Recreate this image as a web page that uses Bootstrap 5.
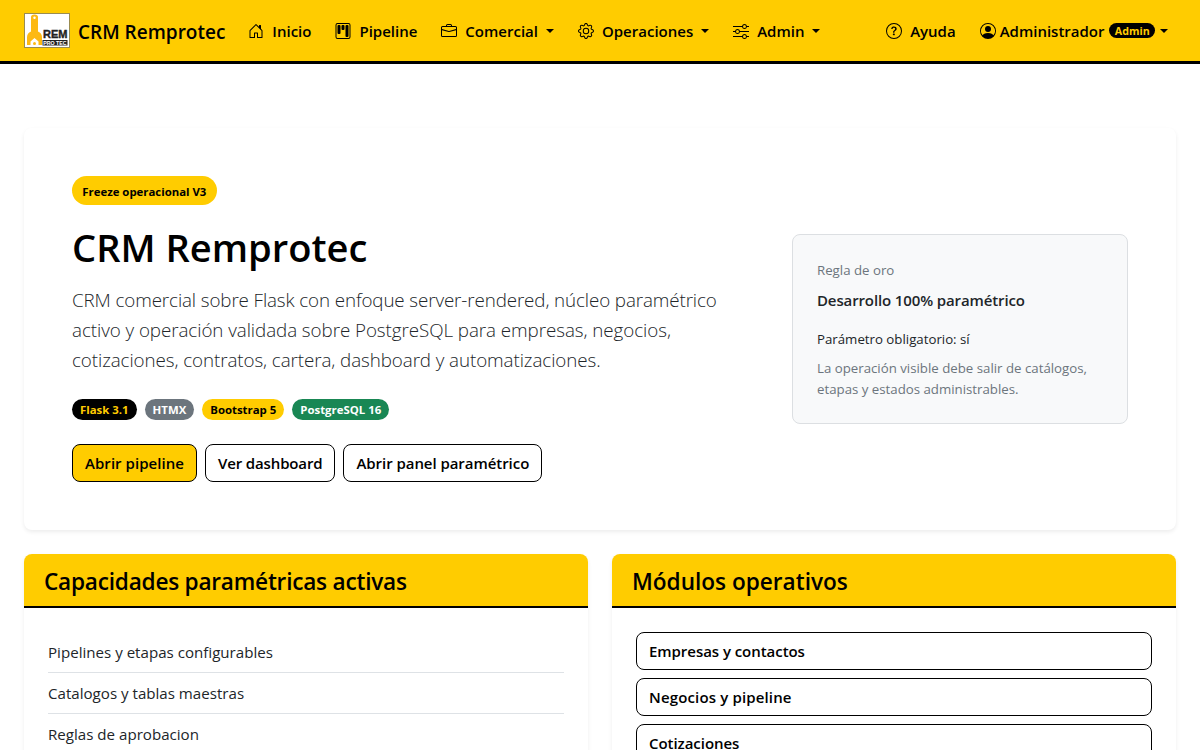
<!DOCTYPE html>
<html lang="es">
<head>
<meta charset="utf-8">
<meta name="viewport" content="width=device-width, initial-scale=1">
<title>CRM Remprotec</title>
<link href="https://cdn.jsdelivr.net/npm/bootstrap@5.3.0/dist/css/bootstrap.min.css" rel="stylesheet">
<style>
:root{--brand:#ffcc00}
body{font-family:"Open Sans","Noto Sans",sans-serif;font-size:15px;line-height:24px;color:#212529;background:#fff;overflow:hidden}
.topbar{background:var(--brand);border-bottom:3px solid #000;height:64px}
.topbar .navbar-brand{font-size:19px;font-weight:600;color:#000;line-height:30px;margin-right:11px}
.topbar .navbar-brand span{position:relative;top:1px}
.topbar .navbar-nav .nav-link{display:flex;align-items:center;color:#000;font-weight:600;font-size:15px;padding:8px 12px;white-space:nowrap}
.topbar .nav-link svg{margin-right:8px;flex:none}
.topbar .dropdown-toggle::after{margin-left:8px;border-top-width:4px;border-left-width:4px;border-right-width:4px;vertical-align:0}
.topbar .navbar-nav .user-link{padding-right:8px}
.topbar .user-link svg{margin-right:4px}
.topbar .user-link::after{margin-left:5px}
.pill{border-radius:50rem;font-weight:700;font-size:11.4px;line-height:12px;padding:4.5px 8px;height:21px;display:inline-block;white-space:nowrap}
.pill-brand{background:var(--brand);color:#000}
.pill-dark{background:#000;color:var(--brand)}
.user-role{font-size:10.7px;height:15px;padding:1.5px 5.3px;margin-left:5px}
.panel{border:0;border-radius:8px;box-shadow:0 2px 4px rgba(0,0,0,.075)}
.hero-card{margin-top:64px}
.hero-tag{height:29px;padding:10px 10.3px 7px;letter-spacing:-.01px}
.hero-title{font-size:38.1px;line-height:48px;font-weight:600;color:#000;padding-top:2px;margin-bottom:14px}
.hero-text{font-size:18.8px;line-height:30px;font-weight:300;white-space:nowrap;margin-bottom:24px}
.hero-text .l1{letter-spacing:-.11px}
.hero-text .l2{letter-spacing:-.06px}
.hero-text .l3{letter-spacing:-.08px}
.btn{font-size:15px;line-height:24px;font-weight:600;border-radius:8px;color:#000;border-color:#000;white-space:nowrap}
.btn-brand{background:var(--brand);letter-spacing:.05px}
.btn-plain{background:#fff;letter-spacing:-.05px}
.btn-tight{letter-spacing:-.14px}
.btn-wide{letter-spacing:.15px}
.rule-box{background:#f8f9fa;border:1px solid #dcdfe2;border-radius:8px;height:190px;padding:25px 24px 23px}
.rule-name{letter-spacing:-.12px;margin:7px 0 17px}
.rule-note{font-size:13.25px;line-height:21px}
.panel-head{background:var(--brand);border-bottom:2px solid #000;border-radius:8px 8px 0 0;height:54px;padding:13px 20px 10px}
.panel-head h2{font-size:22.6px;line-height:29px;font-weight:600;color:#000;margin:0}
.panel-head .head-tight{letter-spacing:-.22px}
.feature{font-size:15.12px;padding:8px 0;border-bottom:1px solid #dee2e6}
</style>
</head>
<body>
<nav class="navbar navbar-expand topbar p-0">
<div class="container-fluid px-4">
<a class="navbar-brand d-flex align-items-center gap-2 p-0" href="#">
<svg width="46" height="35" viewBox="0 0 46 35"><rect x=".5" y=".5" width="45" height="34" fill="#fff" stroke="#9a8c50"/><path d="M7 4Q7 1.500 10.500 1.500T14 4V18.500Q18 20 18 24.500V32H14.500V28.500L10.500 25 6.500 28.500V32H3V24.500Q3 20 7 18.500Z" fill="#fdb913"/><circle cx="10.500" cy="4.800" r="1.200" fill="#fff"/><circle cx="10.500" cy="30.500" r="1.500" fill="#fdb913"/><text x="19" y="25" font-family="Liberation Sans" font-weight="700" font-size="11.500" textLength="24.500" lengthAdjust="spacingAndGlyphs" fill="#222" stroke="#222" stroke-width=".4">REM</text><rect x="18.500" y="27" width="25" height="5.500" fill="#222"/><text x="19.200" y="32" font-family="Liberation Sans" font-weight="700" font-size="6.200" textLength="23.500" lengthAdjust="spacingAndGlyphs" fill="#fff">PRO TEC</text></svg>
<span>CRM Remprotec</span></a>
<ul class="navbar-nav me-auto">
<li class="nav-item"><a class="nav-link" href="#"><svg width="16" height="16" fill="currentColor" viewBox="0 0 16 16"><path d="M8.354 1.146a.5.5 0 0 0-.708 0l-6 6A.5.5 0 0 0 1.500 7.500v7a.5.5 0 0 0 .5.5h4.500a.5.5 0 0 0 .5-.5v-4h2v4a.5.5 0 0 0 .5.5H14a.5.5 0 0 0 .5-.5v-7a.5.5 0 0 0-.146-.354L13 5.793V2.500a.5.5 0 0 0-.5-.5h-1a.5.5 0 0 0-.5.5v1.293zM2.500 14V7.707l5.500-5.500 5.500 5.500V14H10v-4a.5.5 0 0 0-.5-.5h-3a.5.5 0 0 0-.5.5v4z"/></svg><span>Inicio</span></a></li>
<li class="nav-item"><a class="nav-link" href="#"><svg width="16" height="16" fill="currentColor" viewBox="0 0 16 16"><path d="M13.500 1a1 1 0 0 1 1 1v12a1 1 0 0 1-1 1h-11a1 1 0 0 1-1-1V2a1 1 0 0 1 1-1zm-11-1a2 2 0 0 0-2 2v12a2 2 0 0 0 2 2h11a2 2 0 0 0 2-2V2a2 2 0 0 0-2-2z"/><path d="M6.500 3a1 1 0 0 1 1-1h1a1 1 0 0 1 1 1v3a1 1 0 0 1-1 1h-1a1 1 0 0 1-1-1zm-4 0a1 1 0 0 1 1-1h1a1 1 0 0 1 1 1v7a1 1 0 0 1-1 1h-1a1 1 0 0 1-1-1zm8 0a1 1 0 0 1 1-1h1a1 1 0 0 1 1 1v10a1 1 0 0 1-1 1h-1a1 1 0 0 1-1-1z"/></svg><span>Pipeline</span></a></li>
<li class="nav-item"><a class="nav-link dropdown-toggle" href="#"><svg width="16" height="16" fill="currentColor" viewBox="0 0 16 16"><path d="M6.500 1A1.500 1.500 0 0 0 5 2.500V3H1.500A1.500 1.500 0 0 0 0 4.500v8A1.500 1.500 0 0 0 1.500 14h13a1.500 1.500 0 0 0 1.500-1.500v-8A1.500 1.500 0 0 0 14.500 3H11v-.5A1.500 1.500 0 0 0 9.500 1zm0 1h3a.5.5 0 0 1 .5.5V3H6v-.5a.5.5 0 0 1 .5-.5m1.886 6.914L15 7.151V12.500a.5.5 0 0 1-.5.5h-13a.5.5 0 0 1-.5-.5V7.150l6.614 1.764a1.500 1.500 0 0 0 .772 0M1.500 4h13a.5.5 0 0 1 .5.5v1.616L8.129 7.948a.5.5 0 0 1-.258 0L1 6.116V4.500a.5.5 0 0 1 .5-.5"/></svg><span>Comercial</span></a></li>
<li class="nav-item"><a class="nav-link dropdown-toggle" href="#"><svg width="16" height="16" fill="currentColor" viewBox="0 0 16 16"><path d="M8 4.754a3.246 3.246 0 1 0 0 6.492 3.246 3.246 0 0 0 0-6.492M5.754 8a2.246 2.246 0 1 1 4.492 0 2.246 2.246 0 0 1-4.492 0"/><path d="M9.796 1.343c-.527-1.790-3.065-1.790-3.592 0l-.094.319a.873.873 0 0 1-1.255.520l-.292-.160c-1.640-.892-3.433.902-2.540 2.541l.159.292a.873.873 0 0 1-.520 1.255l-.319.094c-1.790.527-1.790 3.065 0 3.592l.319.094a.873.873 0 0 1 .520 1.255l-.160.292c-.892 1.640.901 3.434 2.541 2.540l.292-.159a.873.873 0 0 1 1.255.520l.094.319c.527 1.790 3.065 1.790 3.592 0l.094-.319a.873.873 0 0 1 1.255-.520l.292.160c1.640.893 3.434-.902 2.540-2.541l-.159-.292a.873.873 0 0 1 .520-1.255l.319-.094c1.790-.527 1.790-3.065 0-3.592l-.319-.094a.873.873 0 0 1-.520-1.255l.160-.292c.893-1.640-.902-3.433-2.541-2.540l-.292.159a.873.873 0 0 1-1.255-.520zm-2.633.283c.246-.835 1.428-.835 1.674 0l.094.319a1.873 1.873 0 0 0 2.693 1.115l.291-.160c.764-.415 1.600.420 1.184 1.185l-.159.292a1.873 1.873 0 0 0 1.116 2.692l.318.094c.835.246.835 1.428 0 1.674l-.319.094a1.873 1.873 0 0 0-1.115 2.693l.160.291c.415.764-.420 1.600-1.185 1.184l-.291-.159a1.873 1.873 0 0 0-2.693 1.116l-.094.318c-.246.835-1.428.835-1.674 0l-.094-.319a1.873 1.873 0 0 0-2.692-1.115l-.292.160c-.764.415-1.600-.420-1.184-1.185l.159-.291A1.873 1.873 0 0 0 1.945 8.930l-.319-.094c-.835-.246-.835-1.428 0-1.674l.319-.094A1.873 1.873 0 0 0 3.060 4.377l-.160-.292c-.415-.764.420-1.600 1.185-1.184l.292.159a1.873 1.873 0 0 0 2.692-1.115z"/></svg><span>Operaciones</span></a></li>
<li class="nav-item"><a class="nav-link dropdown-toggle" href="#"><svg width="16" height="16" fill="currentColor" viewBox="0 0 16 16"><path fill-rule="evenodd" d="M11.500 2a1.500 1.500 0 1 0 0 3 1.500 1.500 0 0 0 0-3M9.050 3a2.500 2.500 0 0 1 4.900 0H16v1h-2.050a2.500 2.500 0 0 1-4.900 0H0V3zM4.500 7a1.500 1.500 0 1 0 0 3 1.500 1.500 0 0 0 0-3M2.050 8a2.500 2.500 0 0 1 4.900 0H16v1H6.950a2.500 2.500 0 0 1-4.900 0H0V8zm9.450 4a1.500 1.500 0 1 0 0 3 1.500 1.500 0 0 0 0-3m-2.450 1a2.500 2.500 0 0 1 4.900 0H16v1h-2.050a2.500 2.500 0 0 1-4.900 0H0v-1z"/></svg><span>Admin</span></a></li>
</ul>
<ul class="navbar-nav">
<li class="nav-item"><a class="nav-link" href="#"><svg width="16" height="16" fill="currentColor" viewBox="0 0 16 16"><path d="M8 15A7 7 0 1 1 8 1a7 7 0 0 1 0 14m0 1A8 8 0 1 0 8 0a8 8 0 0 0 0 16"/><path d="M5.255 5.786a.237.237 0 0 0 .241.247h.825c.138 0 .248-.113.266-.250.090-.656.540-1.134 1.342-1.134.686 0 1.314.343 1.314 1.168 0 .635-.374.927-.965 1.371-.673.489-1.206 1.060-1.168 1.987l.003.217a.250.250 0 0 0 .250.246h.811a.250.250 0 0 0 .250-.250v-.105c0-.718.273-.927 1.010-1.486.609-.463 1.244-.977 1.244-2.056 0-1.511-1.276-2.241-2.673-2.241-1.267 0-2.655.590-2.750 2.286m1.557 5.763c0 .533.425.927 1.010.927.609 0 1.028-.394 1.028-.927 0-.552-.420-.940-1.029-.940-.584 0-1.009.388-1.009.940"/></svg><span>Ayuda</span></a></li>
<li class="nav-item"><a class="nav-link dropdown-toggle user-link" href="#"><svg width="16" height="16" fill="currentColor" viewBox="0 0 16 16"><path d="M11 6a3 3 0 1 1-6 0 3 3 0 0 1 6 0"/><path fill-rule="evenodd" d="M0 8a8 8 0 1 1 16 0A8 8 0 0 1 0 8m8-7a7 7 0 0 0-5.468 11.370C3.242 11.226 4.805 10 8 10s4.757 1.225 5.468 2.370A7 7 0 0 0 8 1"/></svg><span>Administrador</span><span class="pill pill-dark user-role">Admin</span></a></li>
</ul>
</div>
</nav>
<main class="container-fluid px-4">
<section class="card panel p-5 mb-4 hero-card">
<div class="row align-items-center">
<div class="col-8">
<div class="mb-3 d-flex"><span class="pill pill-brand hero-tag">Freeze operacional V3</span></div>
<h1 class="hero-title">CRM Remprotec</h1>
<p class="hero-text"><span class="l1">CRM comercial sobre Flask con enfoque server-rendered, núcleo paramétrico</span><br><span class="l2">activo y operación validada sobre PostgreSQL para empresas, negocios,</span><br><span class="l3">cotizaciones, contratos, cartera, dashboard y automatizaciones.</span></p>
<div class="d-flex gap-2 mb-4"><span class="pill pill-dark">Flask 3.1</span><span class="pill text-bg-secondary">HTMX</span><span class="pill pill-brand">Bootstrap 5</span><span class="pill text-bg-success">PostgreSQL 16</span></div>
<div class="d-flex gap-2"><a class="btn btn-brand" href="#">Abrir pipeline</a><a class="btn btn-plain btn-tight" href="#">Ver dashboard</a><a class="btn btn-plain" href="#">Abrir panel paramétrico</a></div>
</div>
<div class="col-4"><div class="rule-box">
<div class="rule-note text-secondary">Regla de oro</div>
<div class="fw-semibold rule-name">Desarrollo 100% paramétrico</div>
<div class="rule-note mb-2">Parámetro obligatorio: sí</div>
<div class="rule-note text-secondary">La operación visible debe salir de catálogos, etapas y estados administrables.</div>
</div></div>
</div>
</section>
<div class="row">
<div class="col-6"><section class="card panel"><div class="panel-head"><h2 class="head-tight">Capacidades paramétricas activas</h2></div>
<div class="p-4"><div class="feature">Pipelines y etapas configurables</div><div class="feature">Catalogos y tablas maestras</div><div class="feature">Reglas de aprobacion</div></div></section></div>
<div class="col-6"><section class="card panel"><div class="panel-head"><h2>Módulos operativos</h2></div>
<div class="p-4 d-grid gap-2"><a class="btn btn-plain text-start" href="#">Empresas y contactos</a><a class="btn btn-plain btn-wide text-start" href="#">Negocios y pipeline</a><a class="btn btn-plain text-start" href="#">Cotizaciones</a></div></section></div>
</div>
</main>
</body>
</html>
